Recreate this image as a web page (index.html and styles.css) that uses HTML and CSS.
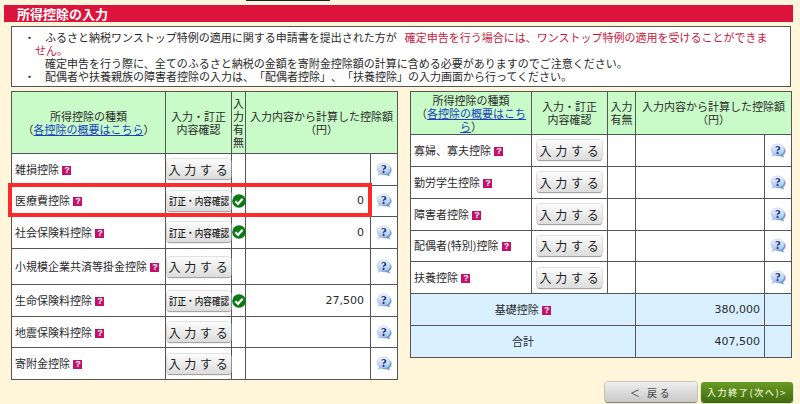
FILE: index.html
```html
<!DOCTYPE html>
<html lang="ja">
<head>
<meta charset="utf-8">
<title>所得控除の入力</title>
<link rel="stylesheet" href="styles.css">
</head>
<body>
<svg class="defs" width="0" height="0" aria-hidden="true">
  <defs>
    <linearGradient id="bubfill" x1="0" y1="0" x2="0" y2="1">
      <stop offset="0" stop-color="#f4f8fe"/>
      <stop offset="1" stop-color="#9fc2ee"/>
    </linearGradient>
  </defs>
  <symbol id="bubble" viewBox="0 0 16 15">
    <ellipse cx="9" cy="8" rx="6.6" ry="5.2" fill="#6f93c8"/>
    <path d="M12 11 L14.5 14.5 L8.5 12.5 Z" fill="#6f93c8"/>
    <ellipse cx="7.6" cy="6.6" rx="6.6" ry="5.6" fill="url(#bubfill)" stroke="#a9c4e8" stroke-width=".6"/>
    <path d="M3 10 L1.6 14 L7 11.6 Z" fill="#a9c7ee"/>
    <text x="7.8" y="10.6" text-anchor="middle" font-family="Liberation Serif" font-weight="bold" font-size="11.5" fill="#14277a">?</text>
  </symbol>
  <symbol id="check" viewBox="0 0 14 14">
    <circle cx="7" cy="7" r="6.8" fill="#0c7a14"/>
    <path d="M3.4 7.2 L6 9.8 L10.6 4.8" fill="none" stroke="#fff" stroke-width="2.2"/>
  </symbol>
</svg>
<div class="topmark"></div>
<h1 class="title">所得控除の入力</h1>
<div class="notice">
  <div class="note"><span class="dot">・</span><div class="note-text"><span class="ind">ふるさと納税ワンストップ特例の適用に関する申請書を提出された方が</span><span class="red">確定申告を行う場合には、ワンストップ特例の適用を受けることができません。</span><br><span class="ind">確定申告を行う際に、全てのふるさと納税の金額を寄附金控除額の計算に含める必要がありますのでご注意ください。</span></div></div>
  <div class="note"><span class="dot">・</span><div class="note-text"><span class="ind">配偶者や扶養親族の障害者控除の入力は、「配偶者控除」、「扶養控除」の入力画面から行ってください。</span></div></div>
</div>
<div class="tables">
  <div class="left-wrap">
    <table class="grid left">
      <colgroup><col class="l1"><col class="l2"><col class="l3"><col class="l4"><col class="l5"></colgroup>
      <thead>
        <tr class="h-left"><th>所得控除の種類<br>（<a href="#">各控除の概要はこちら</a>）</th><th>入力・訂正<br>内容確認</th><th class="narrow">入力有無</th><th colspan="2">入力内容から計算した控除額<br>（円）</th></tr>
      </thead>
      <tbody>
        <tr class="r"><td class="name">雑損控除 <span class="q">?</span></td><td class="btn-cell"><a class="btn" href="#">入力する</a></td><td></td><td class="num"></td><td class="help"><svg class="bub"><use href="#bubble"/></svg></td></tr>
        <tr class="r"><td class="name">医療費控除 <span class="q">?</span></td><td class="btn-cell"><a class="btn edit" href="#"><span>訂正・内容確認</span></a></td><td class="ok"><svg class="chk"><use href="#check"/></svg></td><td class="num">0</td><td class="help"><svg class="bub"><use href="#bubble"/></svg></td></tr>
        <tr class="r"><td class="name">社会保険料控除 <span class="q">?</span></td><td class="btn-cell"><a class="btn edit" href="#"><span>訂正・内容確認</span></a></td><td class="ok"><svg class="chk"><use href="#check"/></svg></td><td class="num">0</td><td class="help"><svg class="bub"><use href="#bubble"/></svg></td></tr>
        <tr class="r tall"><td class="name">小規模企業共済等掛金控除 <span class="q">?</span></td><td class="btn-cell"><a class="btn" href="#">入力する</a></td><td></td><td class="num"></td><td class="help"><svg class="bub"><use href="#bubble"/></svg></td></tr>
        <tr class="r"><td class="name">生命保険料控除 <span class="q">?</span></td><td class="btn-cell"><a class="btn edit" href="#"><span>訂正・内容確認</span></a></td><td class="ok"><svg class="chk"><use href="#check"/></svg></td><td class="num">27,500</td><td class="help"><svg class="bub"><use href="#bubble"/></svg></td></tr>
        <tr class="r"><td class="name">地震保険料控除 <span class="q">?</span></td><td class="btn-cell"><a class="btn" href="#">入力する</a></td><td></td><td class="num"></td><td class="help"><svg class="bub"><use href="#bubble"/></svg></td></tr>
        <tr class="r"><td class="name">寄附金控除 <span class="q">?</span></td><td class="btn-cell"><a class="btn" href="#">入力する</a></td><td></td><td class="num"></td><td class="help"><svg class="bub"><use href="#bubble"/></svg></td></tr>
      </tbody>
    </table>
    <div class="highlight"></div>
  </div>
  <table class="grid right">
    <colgroup><col class="r1"><col class="r2"><col class="r3"><col class="r4"><col class="r5"></colgroup>
    <thead>
      <tr class="h-right"><th>所得控除の種類<br>（<a href="#">各控除の概要はこちら</a>）</th><th>入力・訂正<br>内容確認</th><th>入力<br>有無</th><th colspan="2">入力内容から計算した控除額<br>（円）</th></tr>
    </thead>
    <tbody>
      <tr class="r"><td class="name">寡婦、寡夫控除 <span class="q">?</span></td><td class="btn-cell"><a class="btn" href="#">入力する</a></td><td></td><td class="num"></td><td class="help"><svg class="bub"><use href="#bubble"/></svg></td></tr>
      <tr class="r"><td class="name">勤労学生控除 <span class="q">?</span></td><td class="btn-cell"><a class="btn" href="#">入力する</a></td><td></td><td class="num"></td><td class="help"><svg class="bub"><use href="#bubble"/></svg></td></tr>
      <tr class="r"><td class="name">障害者控除 <span class="q">?</span></td><td class="btn-cell"><a class="btn" href="#">入力する</a></td><td></td><td class="num"></td><td class="help"><svg class="bub"><use href="#bubble"/></svg></td></tr>
      <tr class="r"><td class="name">配偶者(特別)控除 <span class="q">?</span></td><td class="btn-cell"><a class="btn" href="#">入力する</a></td><td></td><td class="num"></td><td class="help"><svg class="bub"><use href="#bubble"/></svg></td></tr>
      <tr class="r"><td class="name">扶養控除 <span class="q">?</span></td><td class="btn-cell"><a class="btn" href="#">入力する</a></td><td></td><td class="num"></td><td class="help"><svg class="bub"><use href="#bubble"/></svg></td></tr>
      <tr class="r blue"><td colspan="3" class="center">基礎控除 <span class="q">?</span></td><td class="num">380,000</td><td></td></tr>
      <tr class="r blue"><td colspan="3" class="center">合計</td><td class="num">407,500</td><td></td></tr>
    </tbody>
  </table>
</div>
<div class="actions">
  <a class="act back" href="#">＜ 戻る</a>
  <a class="act next" href="#">入力終了(次へ)&gt;</a>
</div>
</body>
</html>
```
FILE: styles.css
```css
* { box-sizing: border-box; }
html, body { margin: 0; height: 404px; overflow: hidden; }
body {
  width: 800px;
  background: #fef5da;
  color: #2a2a2a;
  font: 11px/13px "Noto Sans CJK JP", sans-serif;
  text-spacing-trim: space-all;
  padding: 0 7px 0 4px;
  position: relative;
}
.defs { position: absolute; }
.topmark { width: 84px; height: 1px; margin-left: 242px; background: #222; }
.title {
  margin: 4px 0 0;
  height: 17px;
  padding-left: 13px;
  background: #dc143c;
  color: #fff;
  font: bold 13px/17px "Noto Sans CJK JP", sans-serif;
}
.notice {
  margin: 4px 2px 0 7px;
  height: 61px;
  padding: 4px 12px 0 0;
  background: #fff;
  border: 1px solid #555;
}
.note { display: flex; }
.dot { width: 23px; flex: none; text-align: right; }
.note-text { flex: 1; }
.ind { padding-left: 10px; }
.red { color: #c9183c; padding-left: 8px; }
.tables { display: flex; gap: 12px; margin: 4px 0 0 7px; align-items: flex-start; }
.left-wrap { position: relative; flex: none; }
.grid {
  table-layout: fixed;
  border-collapse: collapse;
  background: #fff;
}
.grid th, .grid td { border: 1px solid #555; padding: 0; }
.grid th { background: #c8fbc8; font-weight: normal; text-align: center; }
.left { width: 386px; }
.right { width: 381px; }
.l1 { width: 154px; } .l2 { width: 66px; } .l3 { width: 14px; } .l4 { width: 125px; } .l5 { width: 27px; }
.r1 { width: 121px; } .r2 { width: 76px; } .r3 { width: 28px; } .r4 { width: 129px; } .r5 { width: 27px; }
.h-left { height: 62px; }
.h-right { height: 43px; }
th a { color: #1a3fc0; text-decoration: underline; }
.left .r { height: 31.6px; }
.left .tall { height: 36.5px; }
.right .r { height: 31.85px; }
.name { padding-left: 3px !important; white-space: nowrap; }
.btn-cell { text-align: center; }
.btn {
  display: inline-flex;
  align-items: center;
  justify-content: center;
  width: 64px;
  height: 20px;
  vertical-align: middle;
  border-radius: 3px;
  background: linear-gradient(#fcfcfc, #dcdcdc);
  box-shadow: 0 0 0 .5px #c4c4c4, 0 1px 1px #777;
  color: #222;
  text-decoration: none;
  font-size: 12px;
  letter-spacing: 3.7px;
  padding-left: 3px;
  white-space: nowrap;
}
.edit { letter-spacing: 0; padding-left: 0; font-size: 10px; font-weight: 500; }
.edit span { display: inline-block; transform: scaleX(.86); }
.right .btn { width: 65px; }
.ok { text-align: center; line-height: 0; }
.chk { width: 14px; height: 14px; vertical-align: middle; }
.num {
  text-align: right;
  padding-right: 6px !important;
  font-family: "DejaVu Sans", sans-serif;
}
.right .num { padding-right: 4px !important; }
.help { text-align: center; line-height: 0; }
.bub { width: 16px; height: 15px; vertical-align: middle; }
.q {
  display: inline-block;
  width: 9px;
  height: 9px;
  margin-left: 1px;
  background: #c4106a;
  color: #fff;
  font: bold 9px/9px "Liberation Sans", sans-serif;
  text-align: center;
  vertical-align: 1px;
}
.blue td { background: #d8f0ff; }
.center { text-align: center; }
.highlight {
  position: absolute;
  left: -3px;
  top: 92px;
  width: 364px;
  height: 34px;
  border: 4px solid #ff2a2a;
  pointer-events: none;
}
.actions {
  position: absolute;
  left: 605px;
  top: 382px;
  display: flex;
  gap: 4px;
}
.act {
  width: 92px;
  height: 20px;
  display: flex;
  align-items: center;
  justify-content: center;
  border-radius: 3px;
  text-decoration: none;
  font-size: 9px;
  font-weight: 500;
  letter-spacing: 1.6px;
  white-space: nowrap;
}
.back { background: linear-gradient(#f0f0f0, #c8c8c8); box-shadow: 0 0 0 .5px #999, 0 1px 1px #666; color: #555; font-size: 10px; letter-spacing: 2.5px; }
.next { background: linear-gradient(#6a9a24, #3f6e10); box-shadow: 0 1px 1px #2f5208; color: #eef5d8; }
```
